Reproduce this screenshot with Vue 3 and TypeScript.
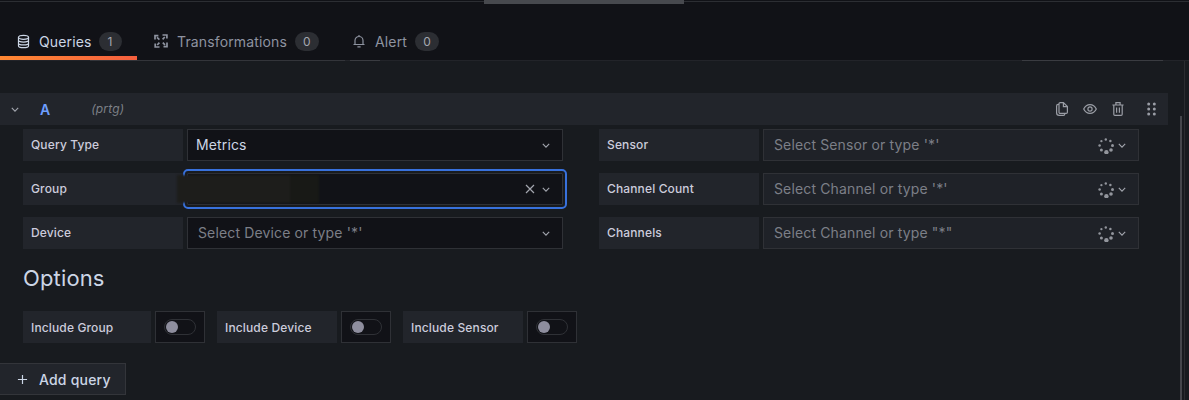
<script setup lang="ts">
interface Field { label: string; placeholder?: string; value?: string; focused?: boolean; loading?: boolean }
const leftFields: Field[] = [
  { label: 'Query Type', value: 'Metrics' },
  { label: 'Group', focused: true },
  { label: 'Device', placeholder: "Select Device or type '*'" },
]
const rightFields: Field[] = [
  { label: 'Sensor', placeholder: "Select Sensor or type '*'", loading: true },
  { label: 'Channel Count', placeholder: "Select Channel or type '*'", loading: true },
  { label: 'Channels', placeholder: 'Select Channel or type "*"', loading: true },
]
const toggles = [
  { label: 'Include Group', width: 128 },
  { label: 'Include Device', width: 120 },
  { label: 'Include Sensor', width: 120 },
]
const spinnerDots = [
  { cx: 8.4, cy: 14.2, r: 2.2 }, { cx: 13, cy: 12, r: 1.8 }, { cx: 14.5, cy: 7.6, r: 1.5 },
  { cx: 12.4, cy: 3, r: 1.25 }, { cx: 7.8, cy: 1.5, r: 1.2 }, { cx: 3.4, cy: 3.2, r: 1.15 },
  { cx: 1.6, cy: 7.6, r: 1.25 }, { cx: 3.4, cy: 12, r: 1.5 },
]
</script>

<template>
  <div class="page">
    <div class="topbar"><div class="handle"></div></div>
    <nav class="tabs">
      <div class="tab active">
        <svg class="tab-icon" viewBox="0 0 14 16" fill="none" stroke="currentColor" stroke-width="1.3">
          <ellipse cx="7" cy="3.5" rx="5.4" ry="2.2" />
          <path d="M1.6 3.5v9c0 1.2 2.4 2.200 5.4 2.200s5.4-1 5.4-2.200v-9M1.6 6.5c0 1.200 2.4 2.200 5.4 2.200s5.4-1 5.4-2.200M1.6 9.500c0 1.200 2.4 2.200 5.4 2.200s5.4-1 5.4-2.200" />
        </svg>
        <span>Queries</span><b class="count">1</b>
      </div>
      <div class="tab tab-transform">
        <svg class="tab-icon" viewBox="0 0 14 14" fill="none" stroke="currentColor" stroke-width="1.7">
          <path d="M1 5.500V1.600h3.400M3 3.400l2.400 2.200M8.500 1h4.400v3.600M10.800 3L8.600 5.300M13 8.500v4.200H9.500M11 10.800L8.800 8.600M5.500 13H1.200V9.600M3.200 11l2.200-2.300" />
        </svg>
        <span>Transformations</span><b class="count">0</b>
      </div>
      <div class="tab tab-alert">
        <svg class="tab-icon" viewBox="0 0 14 14" fill="none" stroke="currentColor" stroke-width="1.2">
          <path d="M1.500 10.500h11M3 10.500V6.500a4 4 0 0 1 8 0v4M5.400 12.800h3.200M7 1v1.400" />
        </svg>
        <span>Alert</span><b class="count">0</b>
      </div>
      <i class="rule-lit"></i>
    </nav>

    <section class="content">
      <header class="query-head">
        <svg class="chev head-chev" viewBox="0 0 10 6"><path d="M1 1l4 4 4-4" /></svg>
        <span class="ref">A</span>
        <em class="source">(prtg)</em>
        <div class="actions">
          <svg class="act-copy" viewBox="0 0 12 14" fill="none" stroke="currentColor" stroke-width="1.200">
            <path d="M3 2.400H2.200C1.200 2.400.6 3 .6 4v6.800c0 1.500 1.100 2.600 2.600 2.600h4.200c.9 0 1.400-.6 1.400-1.300M3 1.800C3 1.100 3.500.6 4.200.6h3.200l4 4v5.600c0 .7-.5 1.200-1.200 1.200H4.200C3.500 11.400 3 10.900 3 10.200zM7.400.6v4h4" />
          </svg>
          <svg class="act-eye" viewBox="0 0 14 10" fill="none" stroke="currentColor" stroke-width="1.200">
            <path d="M.7 5C2.100 2.100 4.300.6 7 .6s4.900 1.500 6.300 4.400C11.900 7.900 9.700 9.400 7 9.400S2.100 7.900.7 5z" />
            <circle cx="7" cy="5" r="2.100" />
          </svg>
          <svg class="act-trash" viewBox="0 0 12 14" fill="none" stroke="currentColor" stroke-width="1.200">
            <path d="M.4 3h11.200M3.900 3V.7h4.200V3M1.800 3v9.300c0 .6.500 1.100 1.100 1.100h6.200c.6 0 1.100-.5 1.100-1.100V3M4.600 5.600v5.200M7.400 5.600v5.200" />
          </svg>
          <svg class="grip" viewBox="0 0 9 14" fill="currentColor">
            <circle cx="1.700" cy="2" r="1.500" /><circle cx="7.300" cy="2" r="1.500" />
            <circle cx="1.700" cy="7" r="1.500" /><circle cx="7.300" cy="7" r="1.500" />
            <circle cx="1.700" cy="12" r="1.500" /><circle cx="7.300" cy="12" r="1.500" />
          </svg>
        </div>
      </header>

      <div class="form-grid">
        <div v-for="(col, i) in [leftFields, rightFields]" :key="i" class="column">
          <div v-for="f in col" :key="f.label" class="row">
            <label class="label">{{ f.label }}</label>
            <div class="select" :class="{ focused: f.focused, muted: f.loading }">
              <span v-if="f.value" class="value">{{ f.value }}</span>
              <span v-else-if="f.placeholder" class="placeholder">{{ f.placeholder }}</span>
              <i v-if="f.focused" class="redact"><i class="redact-inner"></i></i>
              <svg v-if="f.focused" class="clear" viewBox="0 0 10 10"><path d="M1 1l8 8M9 1l-8 8" /></svg>
              <svg v-if="f.loading" class="spinner" viewBox="0 0 16 16" fill="currentColor">
                <circle v-for="(d, n) in spinnerDots" :key="n" :cx="d.cx" :cy="d.cy" :r="d.r" />
              </svg>
              <svg class="chev" viewBox="0 0 10 6"><path d="M1 1l4 4 4-4" /></svg>
            </div>
          </div>
        </div>
      </div>

      <h2 class="options">Options</h2>
      <div class="toggles">
        <div v-for="t in toggles" :key="t.label" class="toggle-group">
          <label class="label" :style="{ width: t.width + 'px' }">{{ t.label }}</label>
          <div class="switch-box"><div class="switch"><span class="knob"></span></div></div>
        </div>
      </div>

      <button class="add" type="button">
        <svg viewBox="0 0 12 12"><path d="M6 1v10M1 6h10" /></svg>
        <span>Add query</span>
      </button>
    </section>
    <div class="scrollbar"></div>
    <div class="edge"></div>
  </div>
</template>

<style>
html, body { margin: 0; background: #181b1f; }
</style>

<style scoped>
.page {
  position: relative;
  width: 1189px;
  height: 400px;
  overflow: hidden;
  background: #181b1f;
  font-family: Inter, "Noto Sans", sans-serif;
  color: #ccccdc;
  letter-spacing: 0.14px;
}
.topbar {
  height: 20px;
  background: linear-gradient(#111217 1px, #2c2e33 1px, #2c2e33 2px, #111217 2px);
}
.handle {
  width: 200px;
  height: 4px;
  margin-left: 484px;
  background: #47494e;
}
.tabs {
  position: relative;
  height: 41px;
  box-sizing: border-box;
  background: #111217;
  border-bottom: 1px solid #222429;
  display: flex;
  font-size: 14px;
}
.rule-lit {
  position: absolute;
  left: 0;
  right: 0;
  bottom: -1px;
  height: 1px;
  background: linear-gradient(90deg,
    transparent 90px, #33353a 90px, #33353a 345px,
    transparent 345px, transparent 350px, #3a3c41 350px, #3a3c41 380px,
    transparent 380px, transparent 1022px, #3a3c41 1022px, #3a3c41 1163px, transparent 1163px);
}
.tab {
  display: flex;
  align-items: center;
  height: 40px;
  box-sizing: border-box;
  padding-top: 2px;
  color: #8e93a0;
  position: relative;
}
.tab.active {
  z-index: 1;
  width: 137px;
  padding-left: 17px;
  color: #ccd6e6;
}
.tab.active::after {
  content: "";
  position: absolute;
  left: 0;
  right: 0;
  bottom: 0;
  height: 4px;
  background: linear-gradient(90deg, #ff8833, #f55f3e);
}
.tab-transform { padding-left: 17px; width: 198px; box-sizing: border-box; }
.tab-alert { padding-left: 17px; }
.tab-icon { width: 13px; height: 15px; margin-right: 9px; flex: none; }
.tab-transform .tab-icon { width: 14px; height: 14px; }
.tab-alert .tab-icon { width: 14px; height: 14px; }
.count {
  font-weight: 400;
  font-size: 12px;
  background: #2c2e33;
  color: #a4a7b0;
  border-radius: 10px;
  height: 19px;
  min-width: 9px;
  padding: 0 7px;
  line-height: 19px;
  text-align: center;
  margin-left: 7px;
}
.tab-transform .count, .tab-alert .count { min-width: 10px; margin-left: 8px; }
.content {
  padding-top: 32px;
}
.query-head {
  width: 1168px;
  height: 32px;
  background: #22252b;
  display: flex;
  align-items: center;
  font-size: 14px;
}
.chev {
  width: 8px;
  height: 5px;
  flex: none;
  fill: none;
  stroke: #a3a6ae;
  stroke-width: 1.4;
}
.head-chev { margin-left: 11px; }
.ref {
  color: #6e9fff;
  font-weight: 600;
  font-size: 14px;
  margin-left: 21px;
}
.source {
  margin-left: 41px;
  padding-bottom: 2px;
  font-size: 12px;
  color: #7d8087;
}
.actions {
  margin-left: auto;
  margin-right: 12px;
  display: flex;
  align-items: center;
  color: #9a9da5;
}
.act-copy { width: 12px; height: 14px; margin-right: 15px; }
.act-eye { width: 14px; height: 10px; margin-right: 15px; }
.act-trash { width: 12px; height: 14px; margin-right: 23px; }
.grip { width: 9px; height: 14px; }
.form-grid {
  display: flex;
  padding: 4px 0 0 23px;
  gap: 36px;
}
.column {
  width: 540px;
  display: flex;
  flex-direction: column;
  gap: 12px;
}
.row { display: flex; gap: 4px; height: 32px; }
.label {
  width: 160px;
  box-sizing: border-box;
  padding-left: 8px;
  background: #22252b;
  font-size: 12px;
  font-weight: 500;
  color: #ccccdc;
  display: flex;
  align-items: center;
}
.row .label { padding-bottom: 2px; }
.select {
  position: relative;
  flex: 1;
  box-sizing: border-box;
  background: #111217;
  border: 1px solid #2f3136;
  display: flex;
  align-items: center;
  padding: 0 12px 0 8px;
  font-size: 14px;
}
.select.muted { background: #1f2228; padding-left: 10px; padding-right: 12px; }
.value { color: #ccd6e6; padding-bottom: 2px; }
.placeholder { color: #7c7f87; padding: 0 0 2px 2px; }
.muted .placeholder { padding-left: 0; }
.select .chev { margin-left: auto; }
.select.muted .spinner {
  margin-left: auto;
  width: 16px;
  height: 16px;
  color: #92959c;
  flex: none;
  margin-top: 2px;
}
.select.muted .chev { margin-left: 4px; }
.select.focused {
  border-radius: 1px;
  outline: 2px solid #3871dc;
  outline-offset: 2px;
}
.redact {
  position: absolute;
  left: -11px;
  top: 1px;
  width: 142px;
  height: 28px;
  background: #181916;
  filter: blur(1px);
}
.redact-inner {
  position: absolute;
  left: 0;
  top: 0;
  width: 113px;
  height: 28px;
  background: #1d1d1b;
  display: block;
}
.clear {
  position: absolute;
  right: 27px;
  width: 10px;
  height: 10px;
  fill: none;
  stroke: #a3a6ae;
  stroke-width: 1.2;
}
.options {
  margin: 15px 0 0 23px;
  font-size: 22px;
  line-height: 28px;
  font-weight: 400;
  color: #ccd6e6;
}
.toggles {
  display: flex;
  padding: 19px 0 0 23px;
  gap: 12px;
}
.toggle-group { display: flex; gap: 4px; height: 32px; }
.toggle-group .label { flex: none; }
.switch-box {
  width: 50px;
  box-sizing: border-box;
  background: #111217;
  border: 1px solid #2f3136;
  display: flex;
  align-items: center;
  justify-content: center;
}
.switch {
  width: 32px;
  height: 16px;
  box-sizing: border-box;
  border: 1px solid #2f3136;
  border-radius: 8px;
  display: flex;
  align-items: center;
  padding-left: 1px;
}
.knob {
  width: 12px;
  height: 12px;
  border-radius: 50%;
  background: #8e8e9e;
}
.add {
  margin: 20px 0 0 0;
  width: 126px;
  height: 32px;
  display: flex;
  align-items: center;
  box-sizing: border-box;
  background: #22252b;
  border: 1px solid #33353a;
  border-left: 0;
  padding: 0 0 0 17px;
  color: #ccd6e6;
  font-family: inherit;
  font-size: 14px;
  font-weight: 500;
  letter-spacing: 0.2px;
}
.add svg {
  width: 11px;
  height: 11px;
  margin-right: 11px;
  fill: none;
  stroke: #ccd6e6;
  stroke-width: 1.3;
}
.scrollbar {
  position: absolute;
  left: 1180px;
  top: 116px;
  width: 2px;
  height: 284px;
  background: #45474c;
}
.edge {
  position: absolute;
  left: 1184px;
  top: 61px;
  width: 1px;
  height: 339px;
  background: #2a2c30;
}
</style>
